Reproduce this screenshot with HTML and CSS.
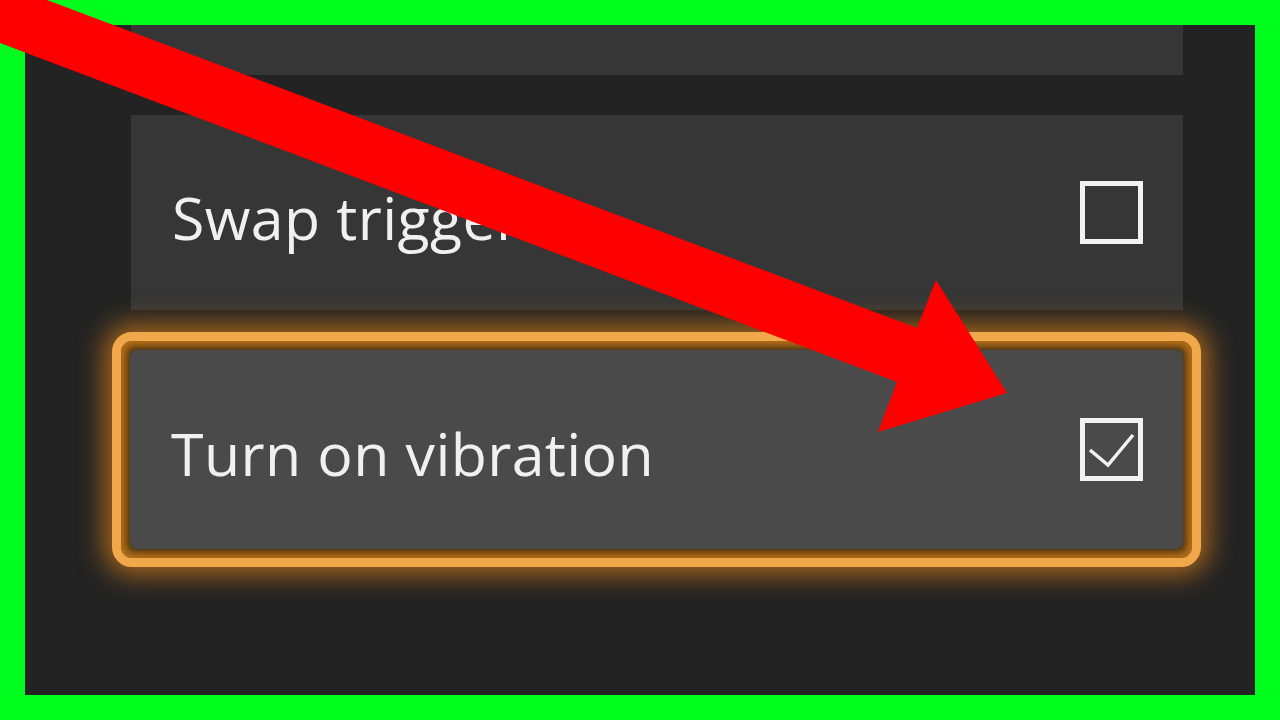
FILE: index.html
```html
<!DOCTYPE html>
<html>
<head>
<meta charset="utf-8">
<link rel="stylesheet" href="styles.css">
</head>
<body>
<div class="screen">
  <div class="card card-top"></div>
  <div class="card card-row">
    <span class="label">Swap triggers</span>
    <span class="box"></span>
  </div>
  <div class="ring">
    <div class="card card-focus">
      <span class="label">Turn on vibration</span>
      <span class="box">
        <svg class="tick" viewBox="0 0 63 65" width="63" height="65"><polyline points="10,33 28,48 53,18" fill="none" stroke="#f2f2f2" stroke-width="3.5"/></svg>
      </span>
    </div>
  </div>
</div>
<svg class="arrow" viewBox="0 0 1280 720" width="1280" height="720">
  <polygon points="0,0 47,0 917,328 936,280 1007,393 878,432 897,382 0,43" fill="#ff0000"/>
</svg>
</body>
</html>
```
FILE: styles.css
```css
html, body {
  margin: 0;
  padding: 0;
}
body {
  width: 1280px;
  height: 720px;
  background: #00ff1f;
  padding: 25px;
  box-sizing: border-box;
  position: relative;
  overflow: hidden;
  font-family: "Open Sans", "Noto Sans", sans-serif;
}
.screen {
  width: 1230px;
  height: 670px;
  background: #232323;
  overflow: hidden;
  display: flex;
  flex-direction: column;
}
.card {
  background: #363636;
  box-sizing: border-box;
  display: flex;
  align-items: center;
  justify-content: space-between;
  padding: 0 40px 0 41px;
}
.card-top {
  margin-left: 106px;
  width: 1052px;
  height: 50px;
  flex: none;
}
.card-row {
  margin-left: 106px;
  margin-top: 40px;
  width: 1052px;
  height: 195px;
  flex: none;
}
.ring {
  margin-left: 87px;
  margin-top: 22px;
  width: 1089px;
  height: 235px;
  box-sizing: border-box;
  border: 9px solid #f0a84a;
  border-radius: 20px;
  padding: 9px;
  background: #3a2c18;
  box-shadow: 0 0 26px 8px rgba(220, 130, 25, 0.7), inset 0 0 9px 6px rgba(200, 120, 20, 0.9);
  flex: none;
}
.card-focus {
  width: 100%;
  height: 100%;
  background: #4a4a4a;
  border-radius: 8px;
  padding: 0 40px 0 41px;
}
.label {
  color: #f0f0f0;
  font-size: 59px;
  line-height: 1;
  letter-spacing: 0.4px;
}
.card-row .label {
  margin-top: 10px;
}
.card-focus .label {
  margin-top: 8px;
}
.box {
  width: 63px;
  height: 63px;
  box-sizing: border-box;
  border: 5px solid #f2f2f2;
  position: relative;
  flex: none;
}
.tick {
  position: absolute;
  left: -5px;
  top: -6px;
}
.arrow {
  position: absolute;
  left: 0;
  top: 0;
}
```
